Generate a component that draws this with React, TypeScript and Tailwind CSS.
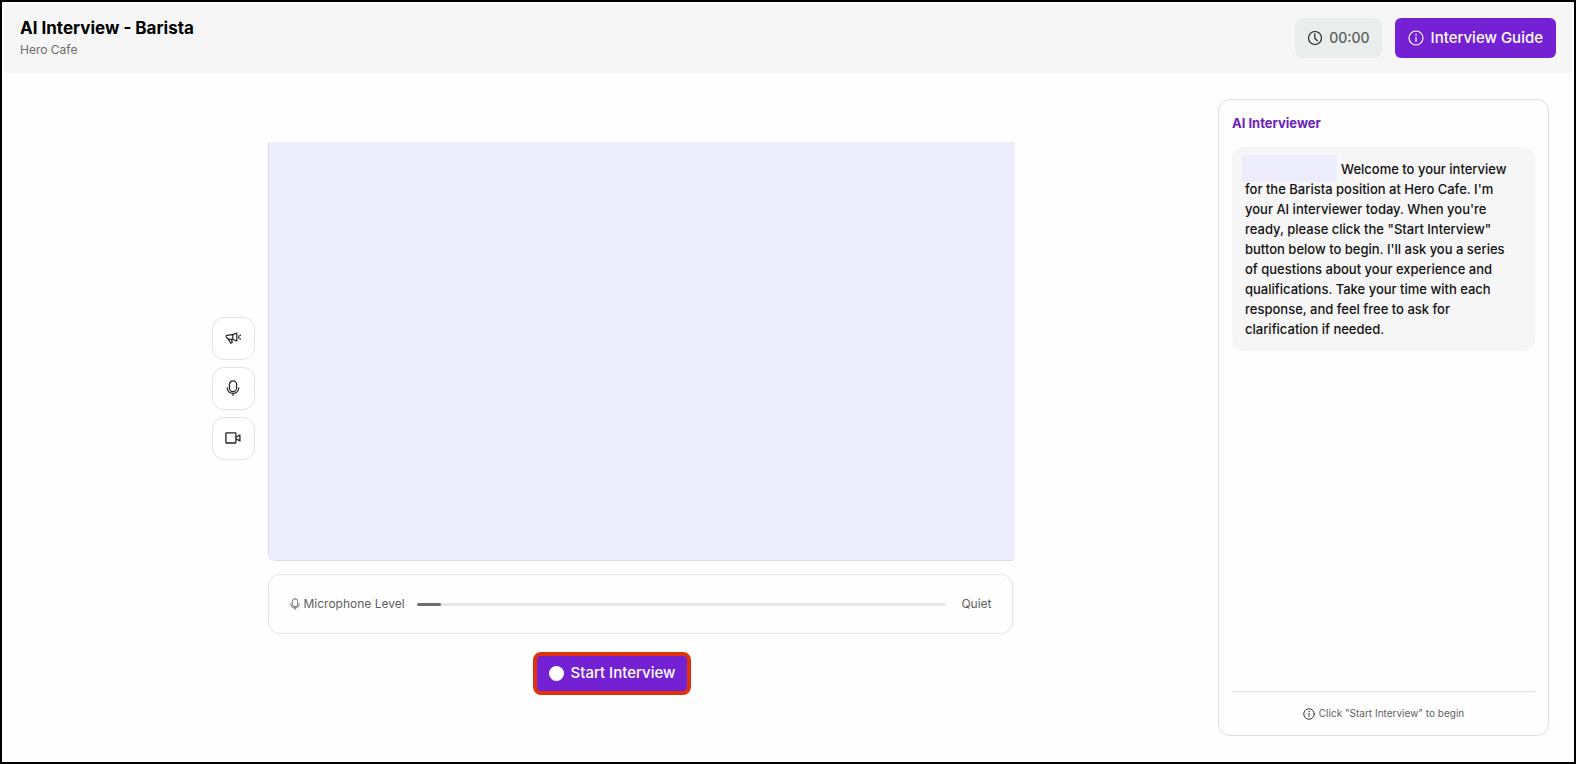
import React from 'react';

interface IconProps {
  className?: string;
}

const ClockIcon: React.FC<IconProps> = ({ className }) => (
  <svg viewBox="0 0 16 16" fill="none" stroke="currentColor" strokeWidth="1.2" strokeLinecap="round" strokeLinejoin="round" className={className} aria-hidden="true">
    <circle cx="8" cy="8" r="6.5" />
    <path d="M7.8 3.8V8l2.6 2.8" />
  </svg>
);

const InfoIcon: React.FC<IconProps> = ({ className }) => (
  <svg viewBox="0 0 16 16" fill="none" stroke="currentColor" strokeWidth="1.2" strokeLinecap="round" className={className} aria-hidden="true">
    <circle cx="8" cy="8" r="7" />
    <path d="M8 7v4.6" />
    <circle cx="8" cy="4.7" r="0.6" fill="currentColor" strokeWidth="0.5" />
  </svg>
);

const MegaphoneIcon: React.FC<IconProps> = ({ className }) => (
  <svg viewBox="0 0 16 16" fill="none" stroke="currentColor" strokeWidth="1.2" strokeLinecap="round" strokeLinejoin="round" className={className} aria-hidden="true">
    <path d="M7.8 4.6 1.8 5.4c-.9.2-1 1.2-.4 1.8l2 1.9 4.4.4Z" />
    <path d="M7.8 4.6 11.8 3v8L7.8 9.5" />
    <path d="m3.4 9.1 2.3 4.2 1.5-.8-.7-3.1" />
    <path d="M13.8 5.8v2.4M15.2 4.8v.6M15.2 8.6v.6" />
  </svg>
);

const MicIcon: React.FC<IconProps> = ({ className }) => (
  <svg viewBox="0 0 16 16" fill="none" stroke="currentColor" strokeWidth="1.2" strokeLinecap="round" strokeLinejoin="round" className={className} aria-hidden="true">
    <rect x="4.4" y="0.9" width="7.2" height="10.8" rx="3.6" />
    <path d="M2.2 7.8c.2 3.4 2.5 5.5 5.8 5.5s5.6-2.1 5.8-5.5M8 13.3v2" />
  </svg>
);

const VideoIcon: React.FC<IconProps> = ({ className }) => (
  <svg viewBox="0 0 16 16" fill="none" stroke="currentColor" strokeWidth="1.3" strokeLinejoin="round" className={className} aria-hidden="true">
    <rect x="0.9" y="2.8" width="10" height="10.2" rx="0.5" />
    <path d="m11 7.2 3.9-2.2v5.9l-3.9-2.1" />
  </svg>
);

const controls = [
  { label: 'Speaker', icon: MegaphoneIcon },
  { label: 'Microphone', icon: MicIcon },
  { label: 'Camera', icon: VideoIcon },
];

const Header: React.FC = () => (
  <header className="flex items-center justify-between bg-[#f6f6f6] px-4 pt-3 pb-[13px]">
    <div>
      <h1 className="text-[17px] leading-6 font-bold text-black">AI Interview - Barista</h1>
      <p className="text-xs leading-5 text-[#6b6b6b]">Hero Cafe</p>
    </div>
    <div className="flex items-center gap-[13px]">
      <div className="flex h-10 items-center gap-1.5 rounded-lg bg-[#e9edec] px-3 text-sm font-medium text-[#5c5f5e]">
        <ClockIcon className="size-4 text-[#222]" />
        <span>00:00</span>
      </div>
      <button className="flex h-10 items-center gap-[7px] rounded-md bg-[#7421d3] px-[13px] text-[15px] font-medium text-white">
        <InfoIcon className="size-4" />
        Interview Guide
      </button>
    </div>
  </header>
);

const MicrophoneLevel: React.FC<{ level: number }> = ({ level }) => (
  <div className="flex h-[60px] items-center rounded-xl border border-[#e4e4e4] px-5 text-xs text-[#5f5f5f]">
    <MicIcon className="mr-[3px] size-3" />
    <span>Microphone Level</span>
    <div
      role="meter"
      aria-label="Microphone Level"
      aria-valuenow={level}
      aria-valuemin={0}
      aria-valuemax={100}
      className="mr-[15px] ml-3 h-[3px] flex-1 rounded-full bg-[#e8e8e8]"
    >
      <div className="h-full rounded-full bg-[#6e6e6e]" style={{ width: `${level}%` }} />
    </div>
    <span>Quiet</span>
  </div>
);

const Transcript: React.FC = () => (
  <aside className="flex w-[331px] shrink-0 flex-col rounded-xl border border-[#dedede] px-[13px]">
    <h2 className="mt-[13px] text-[13px] leading-5 font-bold text-[#6a22be]">AI Interviewer</h2>
    <p className="mt-3.5 rounded-xl bg-[#f6f6f6] py-3 pr-5 pl-[13px] text-[13px] leading-5 font-medium text-[#111]">
      <span className="-my-1 -ml-[3px] mr-1 inline-block h-[27px] w-[95px] bg-[#eeedfd] align-top" />
      Welcome to your interview for the Barista position at Hero Cafe. I'm your AI interviewer today. When you're
      ready, please click the "Start Interview" button below to begin. I'll ask you a series of questions about your
      experience and qualifications. Take your time with each response, and feel free to ask for clarification if
      needed.
    </p>
    <div className="mt-auto flex h-11 items-center justify-center gap-1 border-t border-[#dedede] text-[10px] text-[#5f5f5f]">
      <InfoIcon className="size-3 text-[#222]" />
      Click "Start Interview" to begin
    </div>
  </aside>
);

export default function App() {
  return (
    <div className="flex min-h-screen flex-col border-2 border-black bg-[#fefefe] p-0.5 font-['Inter',sans-serif]">
      <Header />
      <main className="flex flex-1 gap-[22px] pt-[26px] pr-[23px] pb-6 pl-6">
        <section className="flex min-w-0 flex-1 flex-col items-center justify-center pt-0.5">
          <div className="flex w-full max-w-[801px] items-center gap-[13px]">
            <div className="flex flex-col gap-[7px]">
              {controls.map(({ label, icon: Icon }) => (
                <button
                  key={label}
                  aria-label={label}
                  className="flex size-[43px] items-center justify-center rounded-xl border border-[#e4e4e4] bg-white text-[#222]"
                >
                  <Icon className="size-4" />
                </button>
              ))}
            </div>
            <div className="flex min-w-0 flex-1 flex-col gap-[13px]">
              <div className="aspect-video rounded-bl-lg border-b border-l border-[#dcdce0]">
                <div className="-mr-0.5 h-full bg-[#eeedfd]" />
              </div>
              <MicrophoneLevel level={4.5} />
            </div>
          </div>
          <button className="mt-[18px] flex h-[43px] items-center gap-[7px] rounded-lg border-4 border-[#e0330c] bg-[#7421d3] px-3 text-[15px] font-medium text-white">
            <span className="size-[15px] rounded-full bg-white" />
            Start Interview
          </button>
        </section>
        <Transcript />
      </main>
    </div>
  );
}
